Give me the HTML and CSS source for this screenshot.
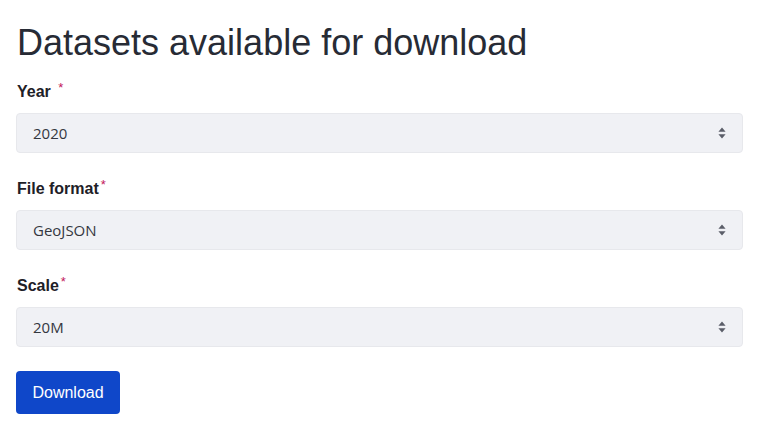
FILE: index.html
```html
<!DOCTYPE html>
<html lang="en">
<head>
<meta charset="utf-8">
<title>Datasets available for download</title>
<link rel="stylesheet" href="styles.css">
</head>
<body>
<main class="page">
  <h1 class="title">Datasets available for download</h1>
  <form class="form">
    <div class="field">
      <label class="label" for="year">Year <span class="req req-gap">*</span></label>
      <div class="select-wrap">
        <select id="year" class="select"><option>2020</option></select>
        <svg class="chev" width="8" height="12" viewBox="0 0 8 12"><path d="M4 0.5 L7.6 4.8 H0.4 Z M4 11.5 L7.6 7.2 H0.4 Z" fill="#5b5e69"/></svg>
      </div>
    </div>
    <div class="field">
      <label class="label" for="fmt">File format<span class="req">*</span></label>
      <div class="select-wrap">
        <select id="fmt" class="select"><option>GeoJSON</option></select>
        <svg class="chev" width="8" height="12" viewBox="0 0 8 12"><path d="M4 0.5 L7.6 4.8 H0.4 Z M4 11.5 L7.6 7.2 H0.4 Z" fill="#5b5e69"/></svg>
      </div>
    </div>
    <div class="field">
      <label class="label" for="scale">Scale<span class="req">*</span></label>
      <div class="select-wrap">
        <select id="scale" class="select"><option>20M</option></select>
        <svg class="chev" width="8" height="12" viewBox="0 0 8 12"><path d="M4 0.5 L7.6 4.8 H0.4 Z M4 11.5 L7.6 7.2 H0.4 Z" fill="#5b5e69"/></svg>
      </div>
    </div>
    <div class="actions">
      <button type="button" class="btn">Download</button>
    </div>
  </form>
</main>
</body>
</html>
```

FILE: styles.css
```css
html, body {
  margin: 0;
  padding: 0;
  background: #ffffff;
}

.page {
  padding: 22px 20px 0 16px;
  font-family: "Liberation Sans", Arial, sans-serif;
}

.title {
  margin: 0 0 0 1px;
  font-size: 36px;
  line-height: 42px;
  font-weight: 400;
  color: #272b35;
}

.form {
  display: flex;
  flex-direction: column;
  margin-top: 18px;
}

.field {
  display: flex;
  flex-direction: column;
  margin-bottom: 26px;
}

.label {
  display: block;
  font-size: 16px;
  line-height: 20px;
  font-weight: 700;
  color: #1e2027;
  padding-left: 1px;
  margin-bottom: 10px;
}

.req {
  color: #c2185b;
  font-size: 13px;
  position: relative;
  top: -5px;
  margin-left: 2px;
  font-weight: 400;
}

.req-gap {
  margin-left: 3px;
}

.select-wrap {
  position: relative;
}

.select {
  appearance: none;
  -webkit-appearance: none;
  width: 100%;
  height: 40px;
  margin: 0;
  padding: 0 40px 0 16px;
  border: 1px solid #e7e8ec;
  border-radius: 4px;
  background: #f0f1f5;
  font-family: "Open Sans", "Noto Sans", sans-serif;
  font-size: 15px;
  color: #34373f;
  box-sizing: border-box;
}

.chev {
  position: absolute;
  right: 17px;
  top: 14px;
  pointer-events: none;
}

.actions {
  margin-top: -2px;
}

.btn {
  width: 104px;
  height: 43px;
  border: 0;
  border-radius: 4px;
  background: #0f47c9;
  color: #ffffff;
  font-family: "Liberation Sans", Arial, sans-serif;
  font-size: 16px;
  padding: 0;
}
```
